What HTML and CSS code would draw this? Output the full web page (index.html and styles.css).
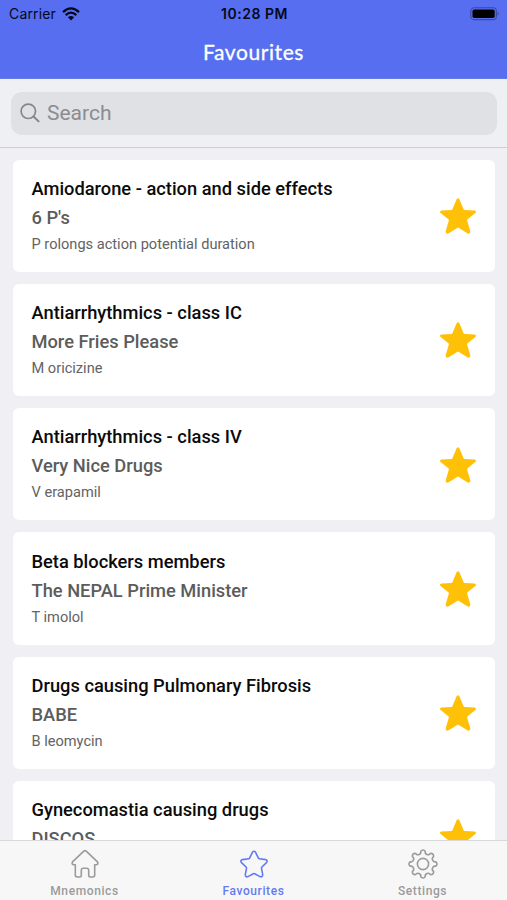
FILE: index.html
```html
<!DOCTYPE html>
<html lang="en">
<head>
<meta charset="utf-8">
<title>Favourites</title>
<link rel="stylesheet" href="styles.css">
</head>
<body>
<svg class="defs" width="0" height="0" aria-hidden="true">
  <symbol id="star" viewBox="0 0 38 38"><path d="M17.6 2.3Q19 .2 20.4 2.3L24.6 12.2Q24.9 12.8 25.6 12.9L35.6 13.5Q38 14.2 36.4 16.1L28.6 22.3Q28 22.9 28.2 23.8L31.4 34.6Q31.4 37.2 28.8 36.5L19 30.6L9.2 36.5Q6.6 37.2 6.6 34.6L9.8 23.8Q10 22.9 9.4 22.3L1.6 16.1Q0 14.2 2.4 13.5L12.4 12.9Q13.1 12.8 13.4 12.2Z"/></symbol>
</svg>
<div class="app">
  <header class="top">
    <div class="status">
      <div class="carrier"><span>Carrier</span>
        <svg width="18" height="14" viewBox="0 0 18 14"><g fill="none" stroke="#05081c" stroke-width="2.3"><path d="M1 5.1Q9-2.4 17 5.1"/><path d="M3.7 8.1Q9 3.2 14.3 8.1"/></g><path fill="#05081c" d="M5.9 10.2Q9 7.6 12.1 10.2L9 13.4Z"/></svg>
      </div>
      <div class="time">10:28 PM</div>
      <svg class="battery" width="30" height="14" viewBox="0 0 30 14"><rect x=".8" y=".8" width="25.6" height="11.8" rx="3.4" fill="none" stroke="#3a49a5" stroke-width="1.1"/><rect x="2.5" y="2.4" width="22.2" height="8.6" rx="1.8"/><path d="M27.7 4.8Q30 6.7 27.7 8.7Z" fill="#3a49a5"/></svg>
    </div>
    <h1 class="title">Favourites</h1>
  </header>
  <div class="search-wrap">
    <div class="search">
      <svg width="22" height="22" viewBox="0 0 22 22" fill="none" stroke="#85868b" stroke-width="1.7" stroke-linecap="round"><circle cx="8.3" cy="9.3" r="7.2"/><path d="M13.8 14.8L18.6 19.4" stroke-width="2"/></svg>
      <span>Search</span>
    </div>
  </div>
  <main class="list">
    <article class="card"><div class="text"><h2>Amiodarone - action and side effects</h2><h3>6 P's</h3><p>P rolongs action potential duration</p></div><svg class="star"><use href="#star"/></svg></article>
    <article class="card"><div class="text"><h2>Antiarrhythmics - class IC</h2><h3>More Fries Please</h3><p>M oricizine</p></div><svg class="star"><use href="#star"/></svg></article>
    <article class="card"><div class="text"><h2>Antiarrhythmics - class IV</h2><h3>Very Nice Drugs</h3><p>V erapamil</p></div><svg class="star"><use href="#star"/></svg></article>
    <article class="card"><div class="text"><h2>Beta blockers members</h2><h3>The NEPAL Prime Minister</h3><p>T imolol</p></div><svg class="star"><use href="#star"/></svg></article>
    <article class="card"><div class="text"><h2>Drugs causing Pulmonary Fibrosis</h2><h3>BABE</h3><p>B leomycin</p></div><svg class="star"><use href="#star"/></svg></article>
    <article class="card"><div class="text"><h2>Gynecomastia causing drugs</h2><h3>DISCOS</h3></div><svg class="star"><use href="#star"/></svg></article>
  </main>
  <nav class="tabs">
    <a class="tab"><svg viewBox="0 0 28 28"><path d="M12.8 1.1Q14 .1 15.2 1.1L26.5 11.8Q27.8 14.4 25 14.7H23.7V25.1Q23.7 27 21.8 27H19Q17.7 27 17.7 25.6V20.3Q17.7 18.2 15.6 18.2H12.4Q10.3 18.2 10.3 20.3V25.6Q10.3 27 9 27H6.2Q4.3 27 4.3 25.1V14.7H3Q.2 14.4 1.5 11.8Z"/></svg><span>Mnemonics</span></a>
    <a class="tab active"><svg viewBox="0 0 28 28"><path d="M12.4 2.3Q14 .1 15.6 2.3L18.4 8.1Q18.7 8.7 19.4 8.8L25.6 9.6Q28.1 10.6 26.5 12.6L21.9 17Q21.4 17.5 21.5 18.3L22.7 24.6Q22.6 27.6 20 26.6L14.7 23.7Q14 23.3 13.3 23.7L8 26.6Q5.4 27.6 5.3 24.6L6.5 18.3Q6.6 17.5 6.1 17L1.5 12.6Q-.1 10.6 2.4 9.6L8.6 8.8Q9.3 8.7 9.6 8.1Z"/></svg><span>Favourites</span></a>
    <a class="tab"><svg viewBox="-14 -14 28 28"><path d="M12.7-2.24A2.6 2.6 0 0 1 12.7 2.24A2.85 2.85 0 0 0 10.57 7.4A2.6 2.6 0 0 1 7.4 10.57A2.85 2.85 0 0 0 2.24 12.7A2.6 2.6 0 0 1-2.24 12.7A2.85 2.85 0 0 0-7.4 10.57A2.6 2.6 0 0 1-10.57 7.4A2.85 2.85 0 0 0-12.7 2.24A2.6 2.6 0 0 1-12.7-2.24A2.85 2.85 0 0 0-10.57-7.4A2.6 2.6 0 0 1-7.4-10.57A2.85 2.85 0 0 0-2.24-12.7A2.6 2.6 0 0 1 2.24-12.7A2.85 2.85 0 0 0 7.4-10.57A2.6 2.6 0 0 1 10.57-7.4A2.85 2.85 0 0 0 12.7-2.24Z"/><circle r="5.6"/></svg><span>Settings</span></a>
  </nav>
</div>
</body>
</html>
```
FILE: styles.css
```css
* { box-sizing: border-box; }
body { margin: 0; font-family: Roboto, sans-serif; }
h1, h2, h3, p { margin: 0; }
svg { display: block; flex: none; }
.defs { position: absolute; }
.app { width: 507px; height: 900px; display: flex; flex-direction: column; overflow: hidden; background: #f0f0f4; }
.top { height: 79px; flex: none; background: #566eef; border-bottom: 1px solid #6579e6; }
.status { height: 27px; display: grid; grid-template-columns: 1fr auto 1fr; align-items: center; padding: 0 7px 0 9px; font-family: Inter, sans-serif; color: #05081c; }
.carrier { display: flex; align-items: center; gap: 6px; font-size: 14px; letter-spacing: 0.15px; }
.time { font-size: 14px; font-weight: 600; letter-spacing: 0.5px; }
.battery { justify-self: end; }
.title { height: 50px; text-align: center; color: #fff; font: 400 21px/50px Lato, sans-serif; letter-spacing: 0.6px; -webkit-text-stroke: 0.3px #fff; }
.search-wrap { height: 69px; flex: none; padding: 12.5px 10px 0 11px; background: #eff0f3; border-bottom: 1px solid #cecfd3; }
.search { height: 43px; display: flex; align-items: center; gap: 5px; padding-left: 9px; border-radius: 11px; background: #dfe1e5; color: #8b8c91; font-size: 21px; }
.list { flex: 1; min-height: 0; overflow: hidden; display: flex; flex-direction: column; gap: 12px; padding: 11.5px 12px 0 13px; }
.card { height: 112.25px; flex: none; display: flex; align-items: center; justify-content: space-between; padding: 0 18px 0 18.5px; border-radius: 6px; background: #fff; }
.text { align-self: flex-start; padding-top: 15.4px; white-space: nowrap; }
h2 { font-size: 18.3px; line-height: 28px; font-weight: 500; color: #0b0b0b; }
h3 { font-size: 18.3px; line-height: 29px; font-weight: 500; color: #5c5c5c; }
p { font-size: 14.6px; line-height: 25px; color: #636363; }
.star { width: 38px; height: 38px; margin-top: 1px; fill: #ffc107; }
.tabs { height: 60px; flex: none; display: flex; background: #f7f7f8; border-top: 1px solid #d8d8da; }
.tab { flex: 1; display: flex; flex-direction: column; align-items: center; padding-top: 9px; color: #9b9b9b; font-size: 12px; font-weight: 500; letter-spacing: 0.6px; }
.tab svg { width: 28px; height: 28px; fill: none; stroke: currentColor; stroke-width: 1.6; stroke-linejoin: round; overflow: visible; }
.tab span { line-height: 16px; margin-top: 5px; }
.active { color: #667af0; }
```
